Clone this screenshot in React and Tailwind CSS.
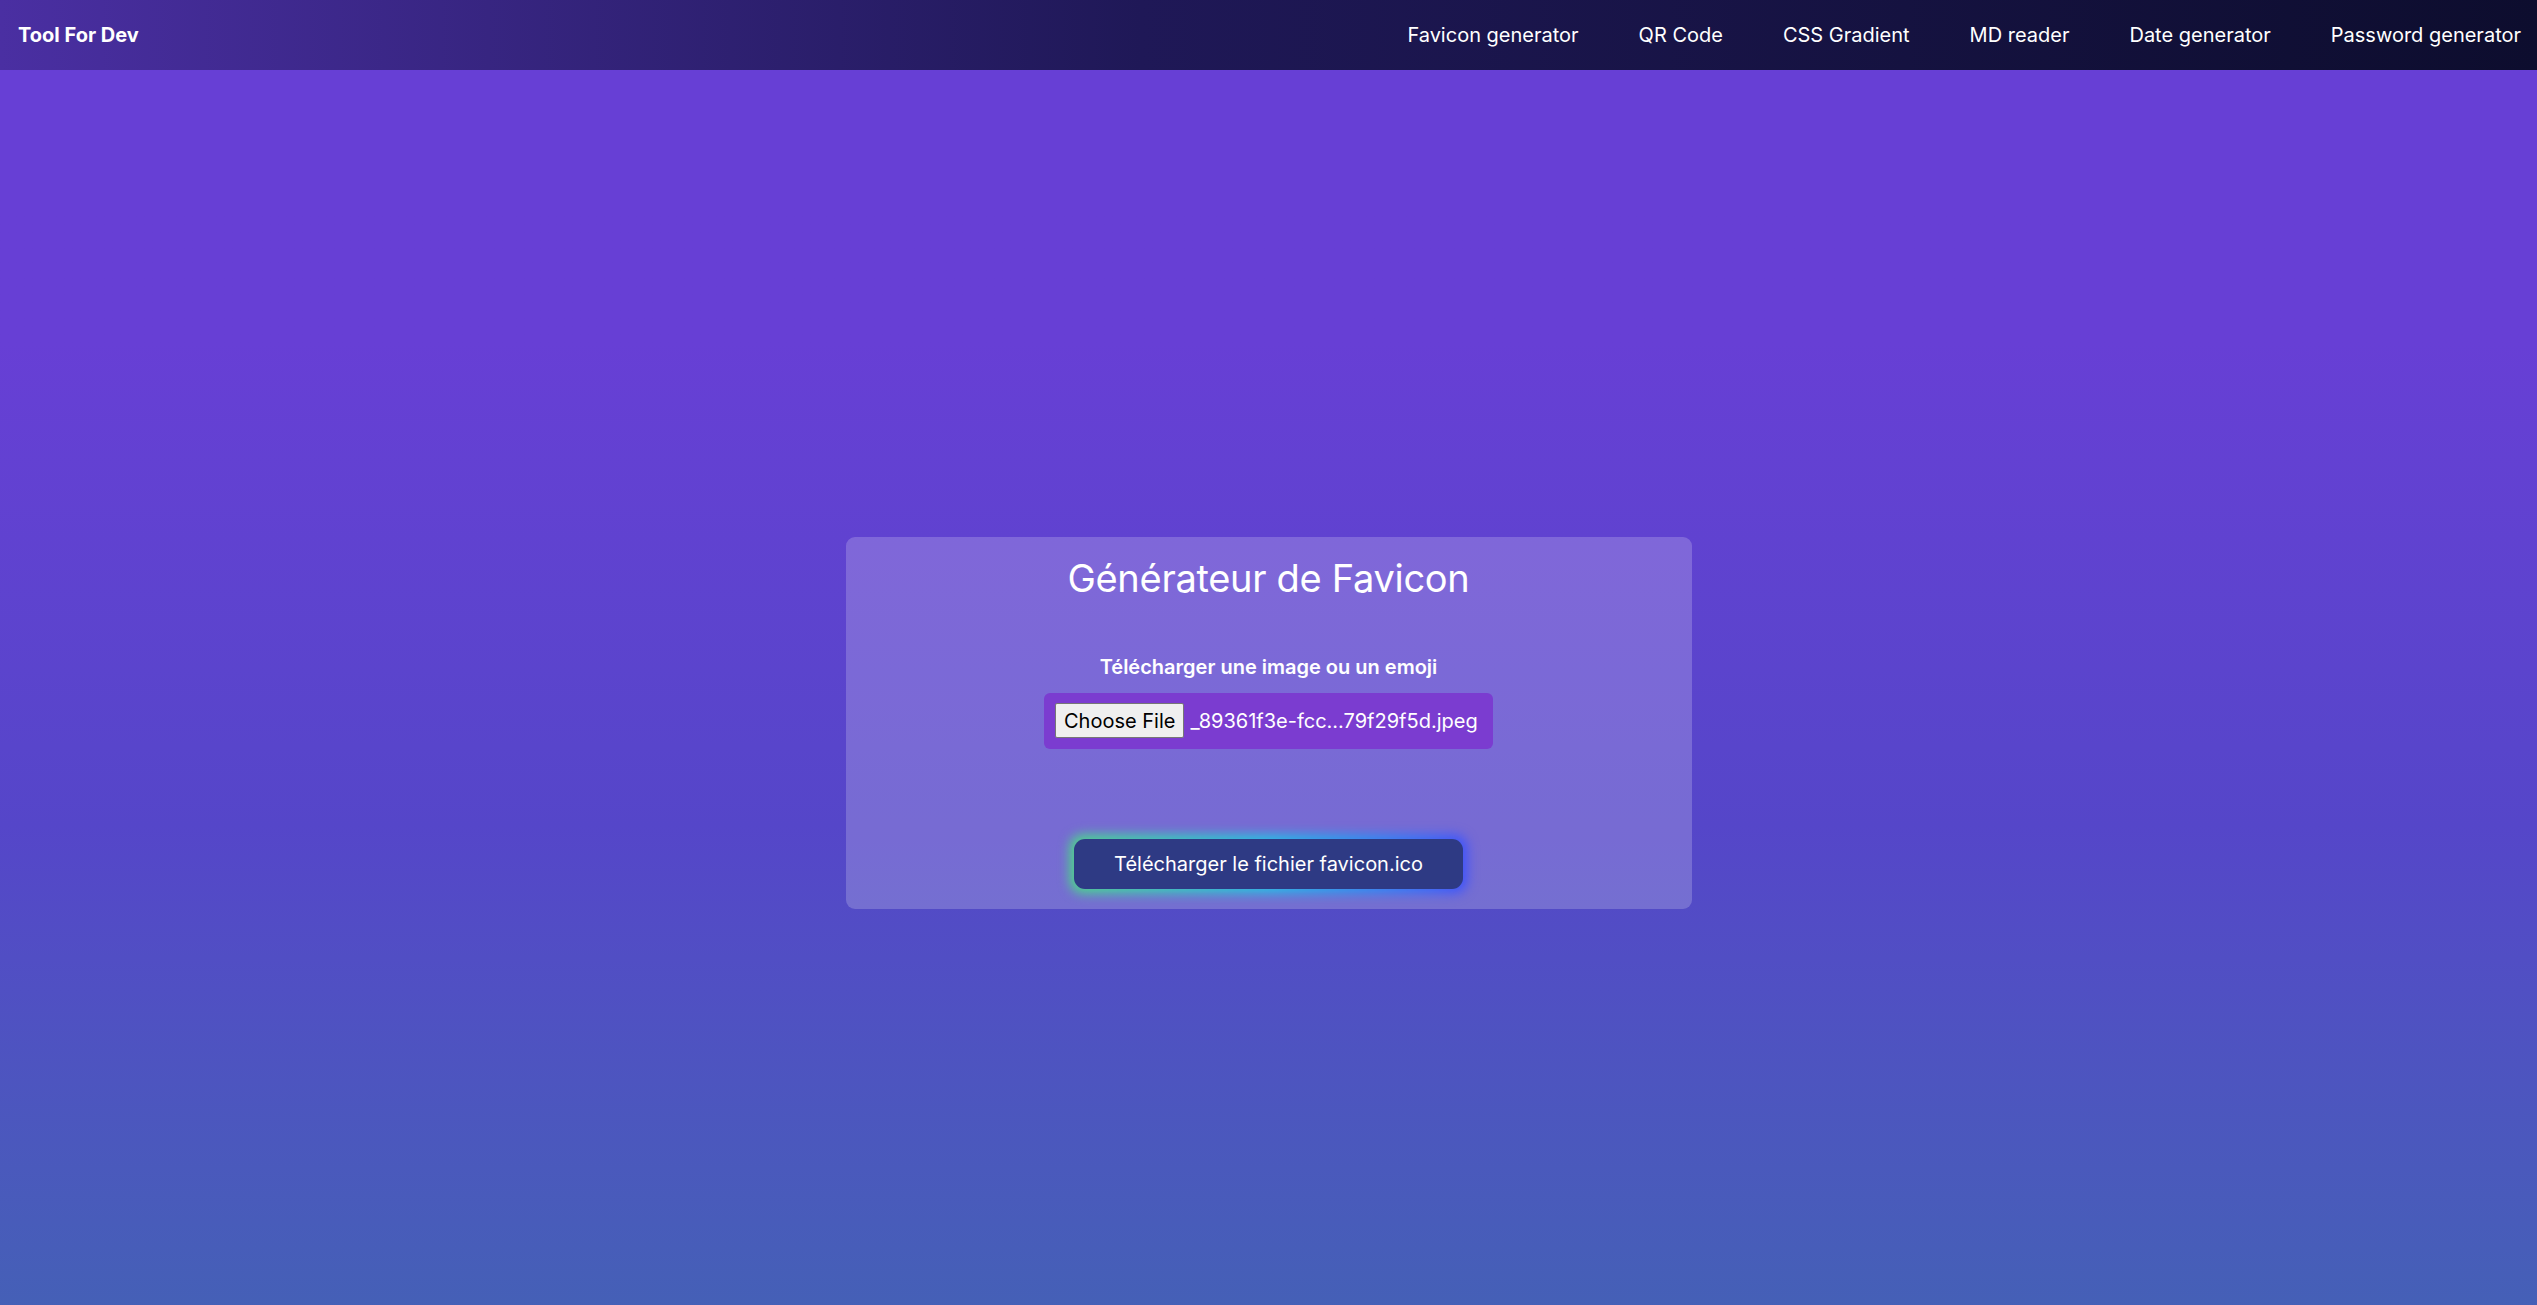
const links = [
  "Favicon generator",
  "QR Code",
  "CSS Gradient",
  "MD reader",
  "Date generator",
  "Password generator",
];

function Navbar() {
  return (
    <nav className="h-[70px] flex items-center justify-between pl-[18px] pr-[16px] bg-linear-to-r from-[#4a2fa2] via-[#1f1857] via-45% to-[#0d0d2e]">
      <a className="text-[20px] font-bold text-white">Tool For Dev</a>
      <ul className="flex items-center gap-[60px]">
        {links.map((l) => (
          <li key={l} className="text-[20px] text-white">
            {l}
          </li>
        ))}
      </ul>
    </nav>
  );
}

function FaviconCard() {
  return (
    <div className="w-[846px] rounded-[9px] bg-white/20 px-5 pt-[19px] pb-[20px] flex flex-col items-center text-white">
      <h1 className="text-[38px] leading-[44px] font-normal tracking-[-0.3px]">
        Générateur de Favicon
      </h1>
      <label className="mt-[53px] text-[20px] leading-[28px] font-semibold">
        Télécharger une image ou un emoji
      </label>
      <div className="mt-[12px] h-[56px] w-[449px] rounded-[6px] bg-[#7b3cd0] flex items-center pl-[11px] pr-[16px]">
        <span className="shrink-0 whitespace-nowrap h-[35px] px-[8px] flex items-center bg-[#efefef] border border-[#767676] rounded-[2px] text-black text-[20px] mr-[6px]">
          Choose File
        </span>
        <span className="text-[20px] text-white whitespace-nowrap">
          _89361f3e-fcc...79f29f5d.jpeg
        </span>
      </div>
      <div className="relative mt-[90px]">
        <div className="absolute -inset-[4px] rounded-[13px] bg-linear-to-r from-[#4ade80] via-[#22c3e6] to-[#3b4dff] blur-[6px]"></div>
        <button className="relative h-[50px] w-[389px] rounded-[11px] bg-[#2e3a84] text-white text-[20px] font-normal">
          Télécharger le fichier favicon.ico
        </button>
      </div>
    </div>
  );
}

export default function App() {
  return (
    <div
      className="min-h-screen bg-linear-to-b from-[#673fd5] from-25% via-[#5546c9] via-60% to-[#4263b4]"
      style={{ fontFamily: "Inter, 'Noto Sans', sans-serif" }}
    >
      <Navbar />
      <main className="h-screen flex items-center justify-center">
        <FaviconCard />
      </main>
    </div>
  );
}
